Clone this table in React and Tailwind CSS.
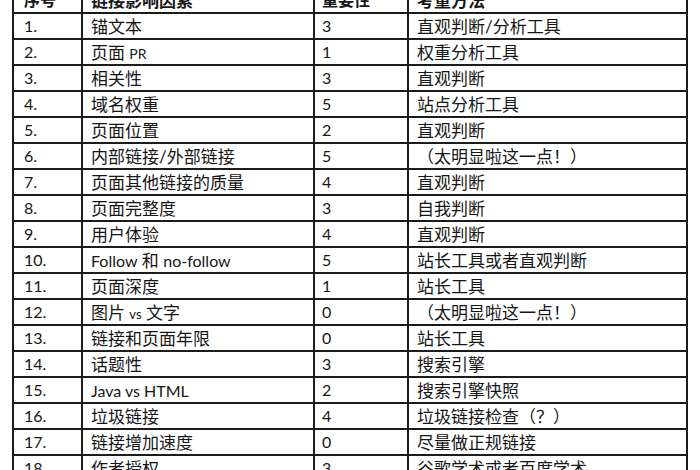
import React from "react";

const L = ({ children, s = "text-[16px]" }) => <span className={s}>{children}</span>;

const rows = [
  ["1.", "锚文本", "3", "直观判断/分析工具"],
  ["2.", <>页面 <L s="text-[14px]">PR</L></>, "1", "权重分析工具"],
  ["3.", "相关性", "3", "直观判断"],
  ["4.", "域名权重", "5", "站点分析工具"],
  ["5.", "页面位置", "2", "直观判断"],
  ["6.", "内部链接/外部链接", "5", "（太明显啦这一点！）"],
  ["7.", "页面其他链接的质量", "4", "直观判断"],
  ["8.", "页面完整度", "3", "自我判断"],
  ["9.", "用户体验", "4", "直观判断"],
  ["10.", <><L>Follow</L> 和 <L>no-follow</L></>, "5", "站长工具或者直观判断"],
  ["11.", "页面深度", "1", "站长工具"],
  ["12.", <>图片 <L s="text-[13px]">vs</L> 文字</>, "0", "（太明显啦这一点！）"],
  ["13.", "链接和页面年限", "0", "站长工具"],
  ["14.", "话题性", "3", "搜索引擎"],
  ["15.", <L>Java vs HTML</L>, "2", "搜索引擎快照"],
  ["16.", "垃圾链接", "4", "垃圾链接检查（？）"],
  ["17.", "链接增加速度", "0", "尽量做正规链接"],
  ["18.", "作者授权", "3", "谷歌学术或者百度学术"],
];

function Row({ cells, header }) {
  const base =
    "h-[26px] flex items-center border-r-2 border-b-2 border-[#1c1c1c] overflow-hidden whitespace-nowrap";
  const fw = header ? "font-bold" : "font-normal";
  return (
    <div className={`flex ${fw}`}>
      <div className={`${base} w-[71px] border-l-2 pl-[10px]`}><span className="text-[16px]">{cells[0]}</span></div>
      <div className={`${base} w-[232px] pl-[8px]`}><span>{cells[1]}</span></div>
      <div className={`${base} w-[94px] pl-[7px]`}><span className="text-[16px]">{cells[2]}</span></div>
      <div className={`${base} w-[279px] pl-[8px]`}><span>{cells[3]}</span></div>
    </div>
  );
}

export default function App() {
  return (
    <div
      className="w-[700px] h-[470px] bg-white overflow-hidden text-[#161616] text-[17px] leading-none"
      style={{ fontFamily: 'Lato, "Noto Sans CJK SC", sans-serif' }}
    >
      <div className="ml-[12px] -mt-[14px] border-t-2 border-[#1c1c1c] w-[678px]">
        <Row header cells={["序号", "链接影响因素", "重要性", "考量方法"]} />
        {rows.map((r, i) => (
          <Row key={i} cells={r} />
        ))}
      </div>
    </div>
  );
}
